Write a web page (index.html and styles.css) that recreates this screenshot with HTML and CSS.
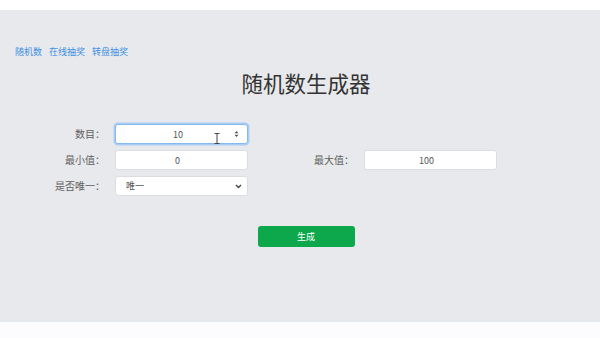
FILE: index.html
```html
<!DOCTYPE html>
<html lang="zh">
<head>
<meta charset="utf-8">
<title>随机数生成器</title>
<link rel="stylesheet" href="styles.css">
</head>
<body>
<div class="topband"></div>
<main class="main">
  <nav class="nav">
    <a href="#">随机数</a>
    <a href="#">在线抽奖</a>
    <a href="#">转盘抽奖</a>
  </nav>
  <h1 class="title">随机数生成器</h1>
  <form class="form">
    <label class="label">数目：</label>
    <div class="field">
      <input class="input input-focus" type="text" value="10">
      <svg class="spin" width="7" height="10" viewBox="0 0 7 10"><path d="M3.5 2 L5.5 4.3 H1.5 Z M3.5 8 L5.5 5.7 H1.5 Z" fill="#555"/></svg>
      <svg class="ibeam" width="6" height="11" viewBox="0 0 6 11"><path d="M0.5 0.5 H5.5 M3 0.5 V10.5 M0.5 10.5 H5.5" stroke="#444" stroke-width="1" fill="none"/></svg>
    </div>
    <div class="blank"></div>
    <div class="blank"></div>
    <label class="label">最小值：</label>
    <input class="input" type="text" value="0">
    <label class="label">最大值：</label>
    <input class="input" type="text" value="100">
    <label class="label">是否唯一：</label>
    <div class="field">
      <div class="select">唯一</div>
      <svg class="chev" width="7" height="5" viewBox="0 0 7 5"><path d="M1 1 L3.5 3.5 L6 1" stroke="#444" stroke-width="1.4" fill="none"/></svg>
    </div>
  </form>
  <div class="actions">
    <button class="btn" type="button">生成</button>
  </div>
</main>
<div class="footer"></div>
</body>
</html>
```
FILE: styles.css
```css
* { box-sizing: border-box; }
html, body {
  margin: 0;
  padding: 0;
  background: #ffffff;
  font-family: "Noto Sans CJK SC", "Noto Sans", sans-serif;
}
.topband { height: 10px; background: #ffffff; }
.main {
  height: 311px;
  background: #e8e9ec;
  padding: 37px 0 0 0;
}
.nav {
  display: flex;
  gap: 7px;
  padding-left: 15px;
  font-size: 9px;
  line-height: 10px;
  height: 10px;
}
.nav a { color: #3d8fe4; text-decoration: none; line-height: 10px; }
.title {
  margin: 13px 0 0 12px;
  text-align: center;
  font-size: 21.5px;
  line-height: 26px;
  height: 26px;
  font-weight: 400;
  color: #333333;
}
.form {
  margin: 28px 0 0 15px;
  display: grid;
  grid-template-columns: 90px 133px 96px 133px;
  grid-auto-rows: 20px;
  column-gap: 10px;
  row-gap: 6px;
}
.label {
  text-align: right;
  font-size: 10px;
  line-height: 20px;
  color: #5f5f5f;
  white-space: nowrap;
}
.field { position: relative; height: 20px; }
.input, .select {
  display: block;
  width: 133px;
  height: 20px;
  margin: 0;
  border: 1px solid #dcdde0;
  border-radius: 3px;
  background: #ffffff;
  font-family: inherit;
  font-size: 9px;
  color: #555555;
  padding: 0 8px 0 0;
  text-align: center;
  outline: none;
}
.input-focus {
  border: 1px solid #86b9f0;
  box-shadow: 0 0 0 1.5px #a9cdf5;
  padding-right: 7px;
}
.select {
  text-align: left;
  padding-left: 10px;
  line-height: 18px;
}
.spin { position: absolute; right: 8px; top: 5px; }
.ibeam { position: absolute; left: 99px; top: 9px; }
.chev { position: absolute; right: 6px; top: 8px; }
.actions {
  margin: 30px 0 0 12px;
  display: flex;
  justify-content: center;
}
.btn {
  display: block;
  width: 97px;
  height: 21px;
  border: none;
  border-radius: 3px;
  background: #0ca84b;
  color: #ffffff;
  font-family: inherit;
  font-size: 9px;
  padding: 0;
}
.footer { height: 17px; background: #fcfbfe; border-top: 1px solid #e3e8ef; }
```
